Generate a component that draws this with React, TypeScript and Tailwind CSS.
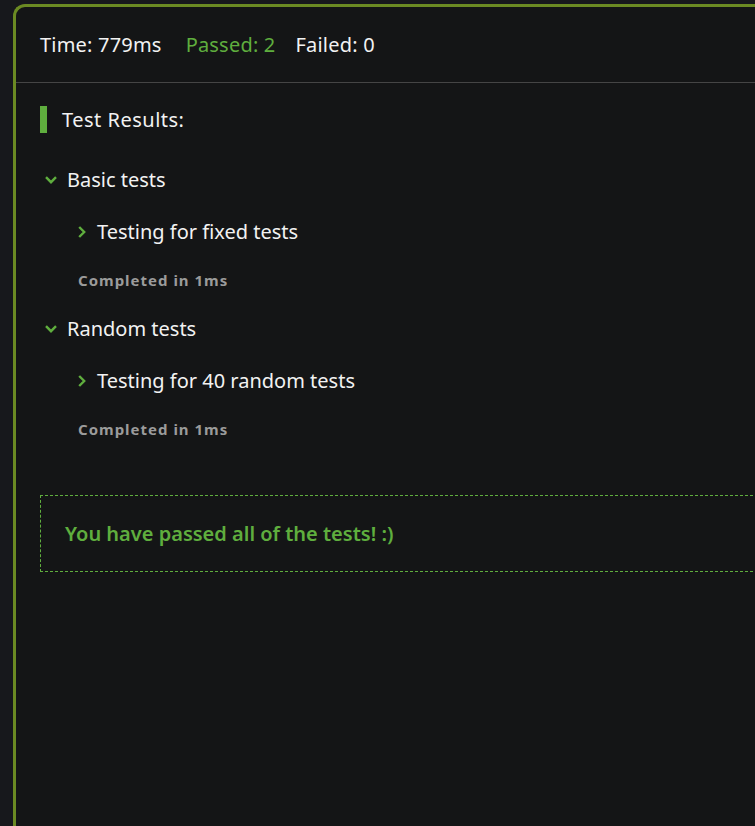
const suites = [
  { name: 'Basic tests', test: 'Testing for fixed tests', time: '1ms' },
  { name: 'Random tests', test: 'Testing for 40 random tests', time: '1ms' },
]

function ChevronDown() {
  return (
    <svg width="12" height="8" viewBox="0 0 12 8" className="shrink-0">
      <path d="M1 1.2 L6 6.2 L11 1.2" fill="none" stroke="#5fae3e" strokeWidth="2.4" />
    </svg>
  )
}

function ChevronRight() {
  return (
    <svg width="8" height="12" viewBox="0 0 8 12" className="shrink-0">
      <path d="M1.2 1 L6.2 6 L1.2 11" fill="none" stroke="#5fae3e" strokeWidth="2.4" />
    </svg>
  )
}

export default function App() {
  return (
    <div
      className="h-[826px] w-full overflow-hidden bg-[#17181c] pl-[13px] pt-[4px]"
      style={{ fontFamily: '"Noto Sans", "Open Sans", sans-serif' }}
    >
      <div className="w-[900px] h-[900px] bg-[#141516] border-l-[3px] border-t-[3px] border-[#6b8a23] rounded-tl-[12px]">
        {/* Summary header */}
        <div className="h-[76px] flex items-center gap-6 pl-6 border-b border-[#454545] text-[20px] tracking-[0.2px] text-[#f2f2f2]">
          <span>Time: 779ms</span>
          <span className="flex gap-5">
            <span className="text-[#5fae3e]">Passed: 2</span>
            <span>Failed: 0</span>
          </span>
        </div>

        <div className="pl-6 pt-[23px]">
          <div className="flex items-center gap-[15px] h-[27px]">
            <span className="block w-[7px] h-[27px] bg-[#5fae3e]" />
            <span className="text-[20px] text-[#f2f2f2] tracking-[0.5px]">Test Results:</span>
          </div>

          <div className="mt-[33px] flex flex-col gap-[25px]">
            {suites.map((s) => (
              <div key={s.name} className="flex flex-col">
                <div className="flex items-center gap-[10px] pl-[5px] h-[28px]">
                  <ChevronDown />
                  <span className="text-[20px] text-[#f2f2f2]">{s.name}</span>
                </div>
                <div className="flex items-center gap-[11px] pl-[38px] h-[28px] mt-[24px]">
                  <ChevronRight />
                  <span className="text-[20px] text-[#f2f2f2]">{s.test}</span>
                </div>
                <div className="pl-[38px] mt-[24px] h-[20px] leading-[20px] text-[15px] font-bold tracking-[1px] text-[#9b9b9b]">
                  Completed in {s.time}
                </div>
              </div>
            ))}
          </div>

          <div className="mt-[56px] h-[77px] border border-dashed border-[#5fae3e] flex items-center pl-6">
            <span className="text-[20px] font-semibold text-[#5fae3e]">You have passed all of the tests! :)</span>
          </div>
        </div>
      </div>
    </div>
  )
}
